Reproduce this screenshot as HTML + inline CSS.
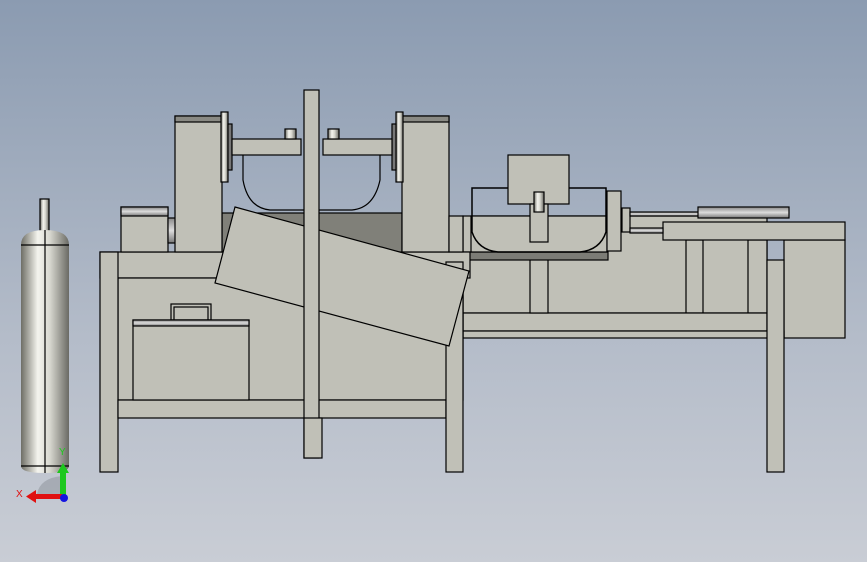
<!DOCTYPE html>
<html><head><style>
html,body{margin:0;padding:0;width:867px;height:562px;overflow:hidden}
body{background:linear-gradient(#8b9bb1,#b4bcc9 60%,#c9cdd5)}
svg{position:absolute;left:0;top:0}
</style></head><body>
<svg width="867" height="562" viewBox="0 0 867 562" xmlns="http://www.w3.org/2000/svg">
<defs>
<linearGradient id="cyl" x1="0" x2="1">
<stop offset="0" stop-color="#6e6e66"/><stop offset="0.35" stop-color="#f4f4ee"/><stop offset="0.6" stop-color="#d8d8d0"/><stop offset="1" stop-color="#6a6a64"/>
</linearGradient>
<linearGradient id="met" x1="0" x2="0" y1="0" y2="1">
<stop offset="0" stop-color="#888"/><stop offset="0.5" stop-color="#ddd"/><stop offset="1" stop-color="#777"/>
</linearGradient>
</defs>
<g fill="#c0c0b7" stroke="#000" stroke-width="1.2">
<!-- right block -->
<rect x="784" y="240" width="61" height="98"/>
<rect x="463" y="216" width="304" height="97"/>
<rect x="686" y="240" width="17" height="73"/>
<rect x="748" y="240" width="19" height="73"/>
<rect x="663" y="222" width="182" height="18"/>
<rect x="463" y="313" width="304" height="18"/>
<rect x="463" y="331" width="321" height="7"/>
<rect x="767" y="260" width="17" height="212"/>
<rect x="530" y="240" width="18" height="73"/>
<!-- cylinder -->
<rect x="622" y="208" width="8" height="24"/>
<rect x="630" y="212" width="70" height="4" fill="url(#met)"/>
<rect x="630" y="228" width="33" height="5" fill="url(#met)"/>
<rect x="698" y="207" width="91" height="11" fill="url(#met)"/>
<!-- pan -->
<rect x="463" y="252" width="145" height="8" fill="#7c7c76"/>
<rect x="471" y="216" width="136" height="36"/>
<path d="M472 188 H606 V232 Q600 250 580 252 H498 Q478 250 472 232 Z" fill="none" stroke-width="1.5"/>
<rect x="607" y="191" width="14" height="60"/>
<rect x="508" y="155" width="61" height="49"/>
<rect x="530" y="204" width="18" height="38"/>
<rect x="534" y="192" width="10" height="20" fill="url(#cyl)"/>
<!-- left table -->
<rect x="100" y="252" width="370" height="26"/>
<rect x="118" y="278" width="345" height="122"/>
<rect x="100" y="252" width="18" height="220"/>
<rect x="118" y="400" width="328" height="18"/>
<rect x="446" y="262" width="17" height="210"/>
<rect x="121" y="207" width="47" height="45"/>
<rect x="121" y="207" width="47" height="9" fill="url(#met)"/>
<rect x="168" y="218" width="8" height="25" fill="url(#met)"/>
<rect x="222" y="213" width="180" height="39" fill="#808079"/>
<rect x="175" y="116" width="47" height="136"/>
<rect x="175" y="116" width="47" height="6" fill="#8a8a84"/>
<rect x="402" y="116" width="47" height="136"/>
<rect x="402" y="116" width="47" height="6" fill="#8a8a84"/>
<rect x="449" y="216" width="14" height="36"/>
<rect x="221" y="112" width="7" height="70" fill="url(#cyl)"/>
<rect x="228" y="124" width="4" height="46" fill="#777"/>
<rect x="396" y="112" width="7" height="70" fill="url(#cyl)"/>
<rect x="392" y="124" width="4" height="46" fill="#777"/>
<path d="M243 155 V180 Q248 208 270 210 H352 Q374 208 380 180 V155" fill="none"/>
<rect x="232" y="139" width="69" height="16"/>
<rect x="323" y="139" width="69" height="16"/>
<rect x="285" y="129" width="11" height="10" fill="url(#cyl)"/>
<rect x="328" y="129" width="11" height="10" fill="url(#cyl)"/>
<!-- toolbox -->
<rect x="171" y="304" width="40" height="16"/>
<rect x="174" y="307" width="34" height="13"/>
<rect x="133" y="320" width="116" height="80"/>
<rect x="133" y="320" width="116" height="6" fill="url(#met)"/>
<!-- tilted box -->
<polygon points="235,207 469,271 449,346 215,283"/>
<!-- post -->
<rect x="304" y="90" width="15" height="368"/>
<rect x="304" y="418" width="18" height="40"/>
<!-- tank -->
<rect x="40" y="199" width="9" height="32" fill="url(#cyl)"/>
<path d="M21 245 Q21 230 45 230 Q69 230 69 245 V466 Q69 473 45 473 Q21 473 21 466 Z" fill="url(#cyl)" stroke="none"/>
<line x1="21" y1="245" x2="69" y2="245"/>
<line x1="21" y1="466" x2="69" y2="466"/>
<line x1="45" y1="230" x2="45" y2="473"/>
</g>
<!-- triad -->
<path d="M37 494 Q40 478 62 476 V496 Z" fill="#9aa0a8" opacity="0.7"/>
<rect x="60" y="472" width="6" height="24" fill="#1ec81e"/>
<polygon points="57,473 63,463 69,473" fill="#1ec81e"/>
<rect x="34" y="494" width="28" height="5" fill="#e01010"/>
<polygon points="36,490 26,496.5 36,503" fill="#e01010"/>
<circle cx="64" cy="498" r="4" fill="#1414e0"/>
<text x="59" y="455" font-family="Liberation Sans,sans-serif" font-size="10" fill="#1ec81e">Y</text>
<text x="16" y="497" font-family="Liberation Sans,sans-serif" font-size="10" fill="#e01010">X</text>
</svg>
</body></html>
